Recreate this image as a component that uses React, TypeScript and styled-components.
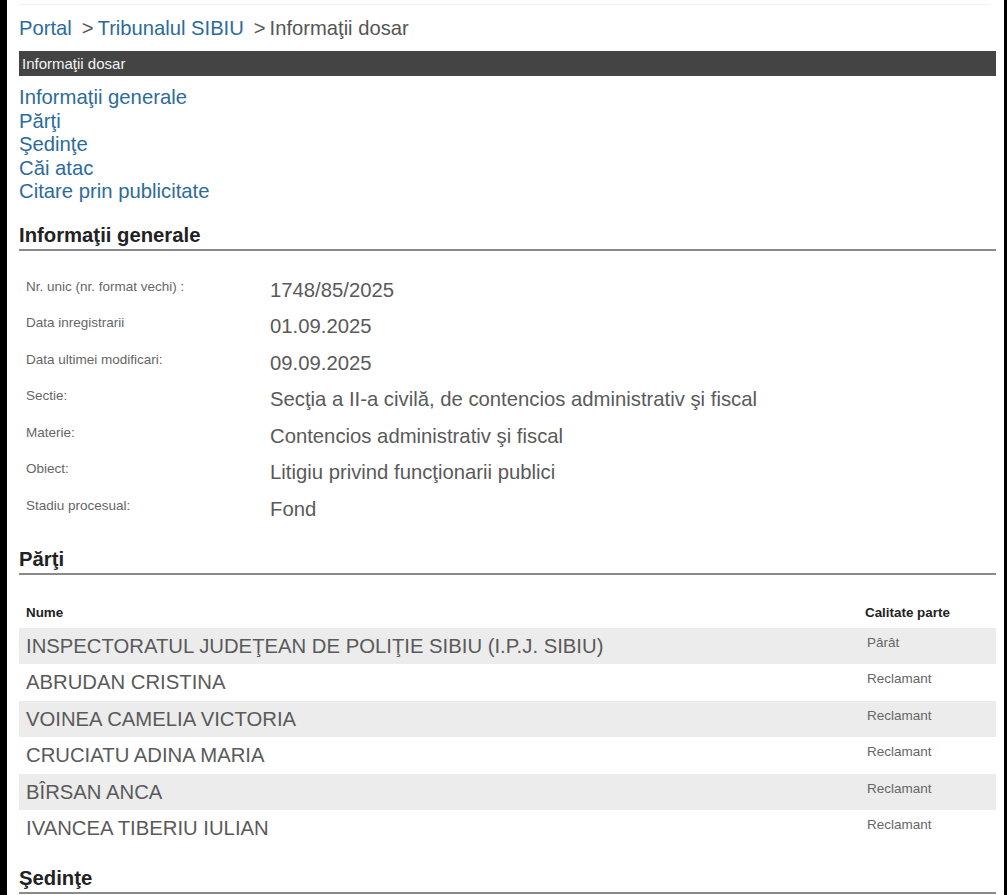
import React from "react";
import styled, { createGlobalStyle } from "styled-components";

const Global = createGlobalStyle`
  html, body { margin: 0; padding: 0; background: #000; }
  body { font-family: "Liberation Sans", Arial, Helvetica, sans-serif; }
  * { box-sizing: border-box; }
`;

const Frame = styled.div`
  margin-left: 7px;
  margin-right: 3px;
  min-height: 895px;
  background: #fff;
  padding: 0 8px 0 12px;
`;

const TopStrip = styled.div`
  height: 5px;
  border-bottom: 1px solid #f1f1f1;
  margin-right: 6px;
`;

const Breadcrumb = styled.div`
  margin-top: 11px;
  font-size: 20.2px;
  line-height: 24px;
  color: #555;
  display: flex;
  align-items: baseline;
`;

const Crumb = styled.a`
  color: #2c6b9b;
  text-decoration: none;
`;

const Sep = styled.span`
  margin-left: 10px;
  margin-right: 4px;
  color: #555;
`;

const DarkBar = styled.div`
  margin-top: 11px;
  height: 25px;
  background: #444;
  color: #f4f4f4;
  font-size: 15px;
  line-height: 25px;
  padding-left: 3px;
`;

const NavList = styled.nav`
  margin-top: 10px;
  display: flex;
  flex-direction: column;
`;

const NavLink = styled.a`
  color: #2c6b9b;
  font-size: 20.3px;
  line-height: 23.5px;
  text-decoration: none;
`;

const SectionTitle = styled.h2`
  margin: 19px 0 0;
  font-size: 20.3px;
  line-height: 24px;
  font-weight: bold;
  color: #222;
  padding-bottom: 2px;
  border-bottom: 2px solid #8a8a8a;
`;

const InfoList = styled.div`
  margin-top: 21px;
  display: flex;
  flex-direction: column;
`;

const InfoRow = styled.div`
  display: grid;
  grid-template-columns: 251px 1fr;
  align-items: start;
  height: 36.6px;
  padding-top: 7px;
`;

const InfoLabel = styled.div`
  padding-left: 7px;
  font-size: 13.5px;
  line-height: 15px;
  color: #666;
`;

const InfoValue = styled.div`
  font-size: 20.3px;
  line-height: 22px;
  color: #5a5a5a;
`;

const PartsTable = styled.div`
  margin-top: 23px;
  display: flex;
  flex-direction: column;
`;

const PartsHeader = styled.div`
  display: grid;
  grid-template-columns: 1fr 131px;
  height: 30px;
  padding-top: 7px;
  font-size: 13.4px;
  line-height: 15px;
  font-weight: bold;
  color: #222;
`;

const HeadCell = styled.div<{ $pad: number }>`
  padding-left: ${(p) => p.$pad}px;
`;

const PartRow = styled.div<{ $shade: boolean }>`
  display: grid;
  grid-template-columns: 1fr 131px;
  align-items: start;
  height: 36.5px;
  padding-top: 7px;
  background: ${(p) => (p.$shade ? "#ececec" : "#fff")};
`;

const PartName = styled.div`
  padding-left: 7px;
  font-size: 20.3px;
  line-height: 22px;
  color: #5a5a5a;
`;

const PartRole = styled.div`
  padding-left: 2px;
  font-size: 13.5px;
  line-height: 15px;
  color: #666;
`;

const info: [string, string][] = [
  ["Nr. unic (nr. format vechi) :", "1748/85/2025"],
  ["Data inregistrarii", "01.09.2025"],
  ["Data ultimei modificari:", "09.09.2025"],
  ["Sectie:", "Secţia a II-a civilă, de contencios administrativ şi fiscal"],
  ["Materie:", "Contencios administrativ şi fiscal"],
  ["Obiect:", "Litigiu privind funcţionarii publici"],
  ["Stadiu procesual:", "Fond"],
];

const parts: [string, string][] = [
  ["INSPECTORATUL JUDEŢEAN DE POLIŢIE SIBIU (I.P.J. SIBIU)", "Pârât"],
  ["ABRUDAN CRISTINA", "Reclamant"],
  ["VOINEA CAMELIA VICTORIA", "Reclamant"],
  ["CRUCIATU ADINA MARIA", "Reclamant"],
  ["BÎRSAN ANCA", "Reclamant"],
  ["IVANCEA TIBERIU IULIAN", "Reclamant"],
];

const links = [
  "Informaţii generale",
  "Părţi",
  "Şedinţe",
  "Căi atac",
  "Citare prin publicitate",
];

export default function App() {
  return (
    <>
      <Global />
      <Frame>
        <TopStrip />
        <Breadcrumb>
          <Crumb href="#">Portal</Crumb>
          <Sep>&gt;</Sep>
          <Crumb href="#">Tribunalul SIBIU</Crumb>
          <Sep>&gt;</Sep>
          <span>Informaţii dosar</span>
        </Breadcrumb>
        <DarkBar>Informaţii dosar</DarkBar>
        <NavList>
          {links.map((l) => (
            <NavLink key={l} href="#">
              {l}
            </NavLink>
          ))}
        </NavList>
        <SectionTitle>Informaţii generale</SectionTitle>
        <InfoList>
          {info.map(([k, v]) => (
            <InfoRow key={k}>
              <InfoLabel>{k}</InfoLabel>
              <InfoValue>{v}</InfoValue>
            </InfoRow>
          ))}
        </InfoList>
        <SectionTitle>Părţi</SectionTitle>
        <PartsTable>
          <PartsHeader>
            <HeadCell $pad={7}>Nume</HeadCell>
            <HeadCell $pad={0}>Calitate parte</HeadCell>
          </PartsHeader>
          {parts.map(([n, r], i) => (
            <PartRow key={n} $shade={i % 2 === 0}>
              <PartName>{n}</PartName>
              <PartRole>{r}</PartRole>
            </PartRow>
          ))}
        </PartsTable>
        <SectionTitle>Şedinţe</SectionTitle>
      </Frame>
    </>
  );
}
